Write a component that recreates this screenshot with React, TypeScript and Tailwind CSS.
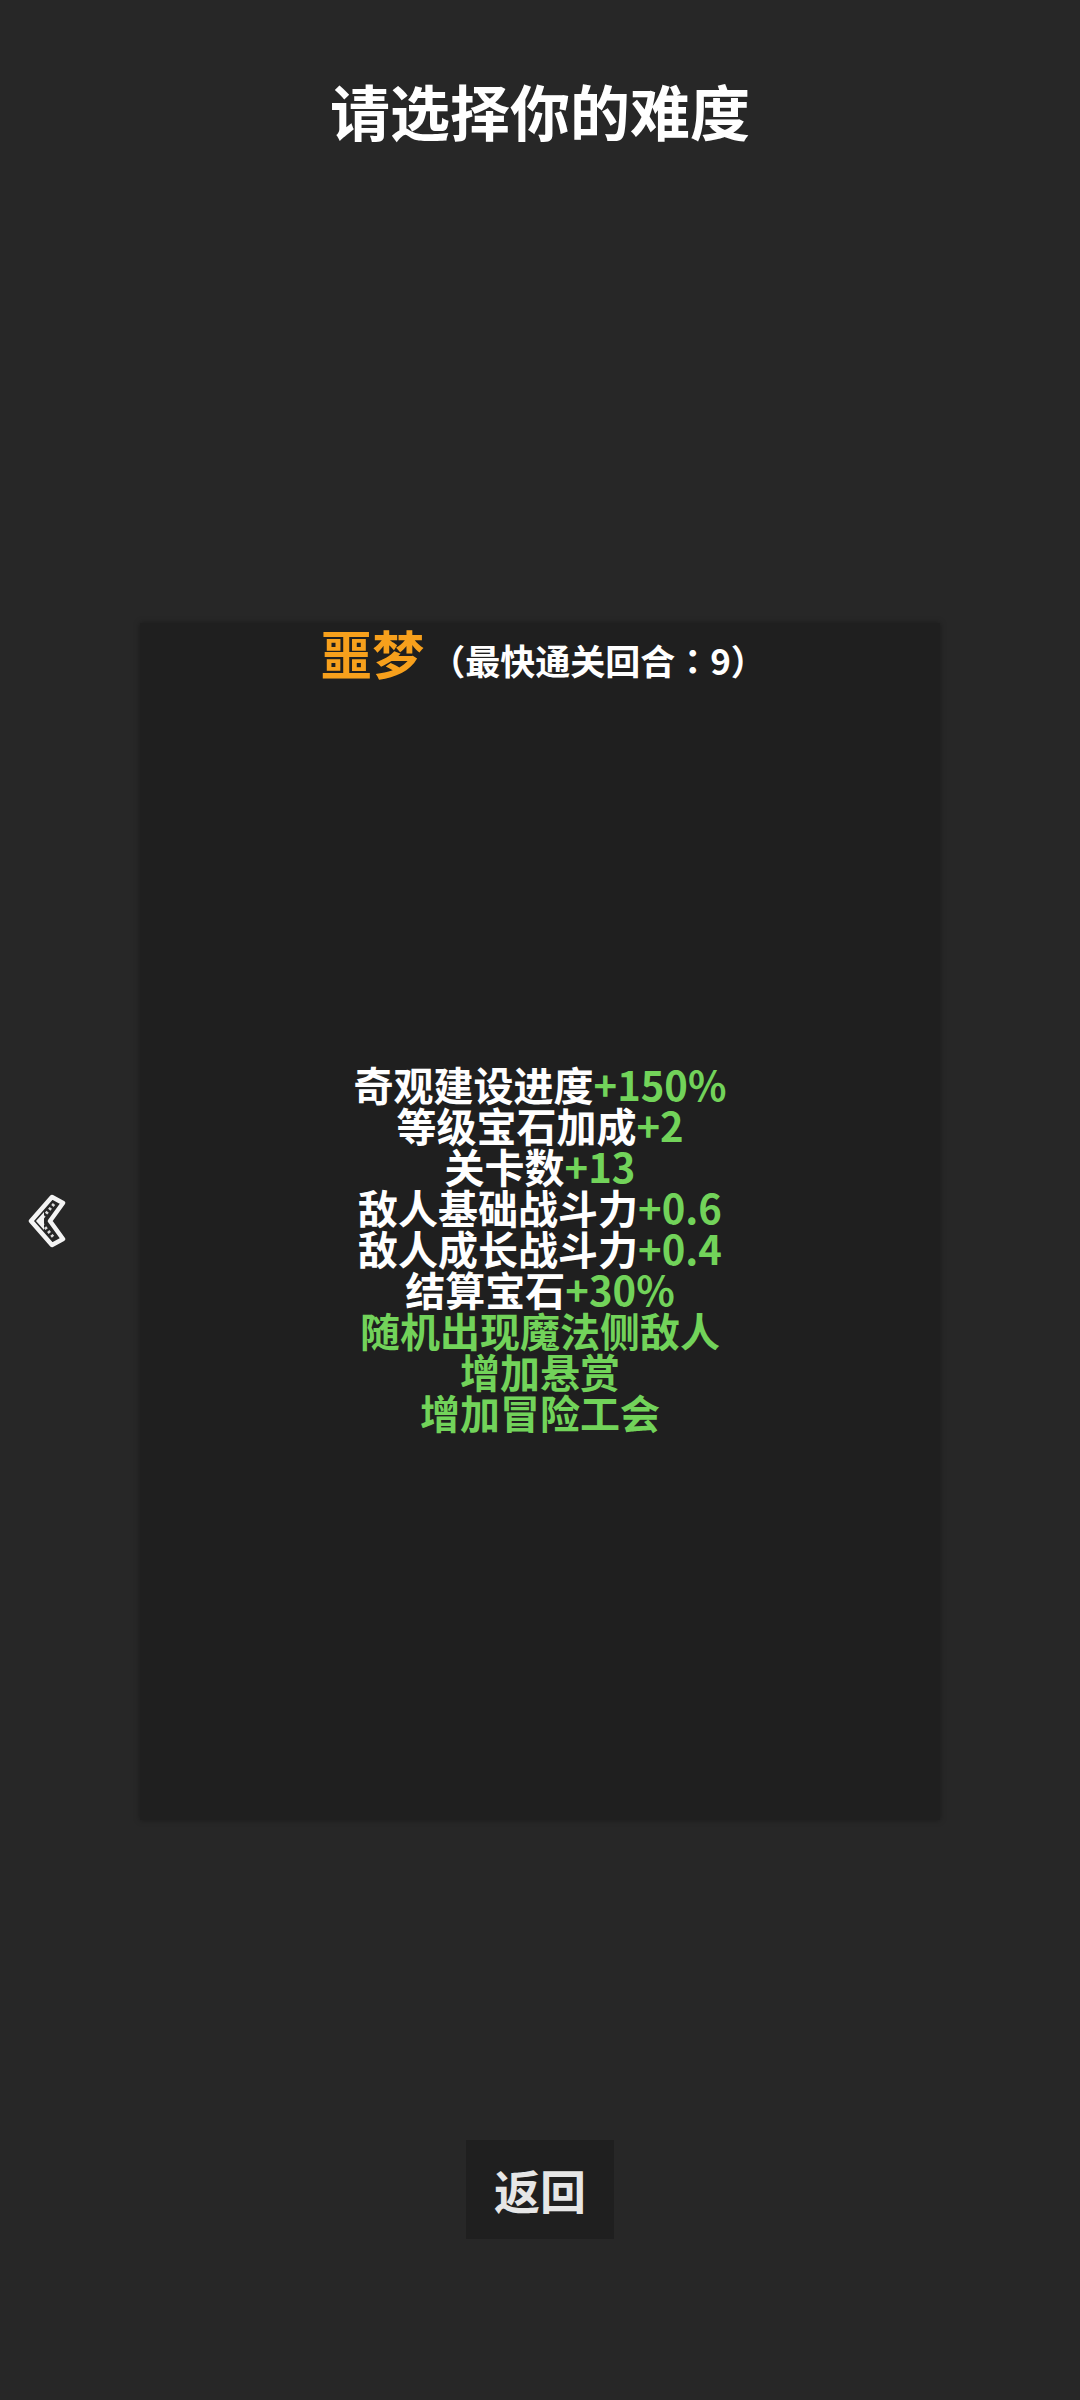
import React from 'react';

type Line = { label?: string; value: string };

const LINES: Line[] = [
  { label: '奇观建设进度', value: '+150%' },
  { label: '等级宝石加成', value: '+2' },
  { label: '关卡数', value: '+13' },
  { label: '敌人基础战斗力', value: '+0.6' },
  { label: '敌人成长战斗力', value: '+0.4' },
  { label: '结算宝石', value: '+30%' },
  { value: '随机出现魔法侧敌人' },
  { value: '增加悬赏' },
  { value: '增加冒险工会' },
];

// pixel-art style left chevron
const PixelChevron: React.FC = () => (
  <svg width="40" height="54" viewBox="0 0 40 54">
    <polygon points="26,3 37,9 24,27 37,45 26,51 5,27" fill="#262626" stroke="#f4f4f4" strokeWidth="4.5" strokeLinejoin="round" />
    <polyline points="28,10 14,27 28,44" fill="none" stroke="#dcdcdc" strokeWidth="3" strokeDasharray="2.5 2.5" />
    <polygon points="10,27 18,18 18,36" fill="#f4f4f4" />
  </svg>
);

const App: React.FC = () => {
  return (
    <div
      className="w-full h-[2400px] bg-[#272727] flex flex-col items-center relative"
      style={{ fontFamily: '"Noto Sans CJK SC", "Noto Sans", sans-serif' }}
    >
      <h1 className="pt-[68px] text-[60px] leading-[84px] font-bold text-white">请选择你的难度</h1>

      <div className="mt-[471px] w-[800px] h-[1197px] bg-[#1f1f1f] shadow-[0_0_6px_rgba(0,0,0,0.35)] flex flex-col">
        <div className="flex items-baseline justify-center leading-[60px] font-bold pl-[6px]">
          <span className="text-[52px] text-[#f7a01c] mr-[6px]">噩梦</span>
          <span className="text-[35px] text-white">
            （最快通关回合<span style={{ fontFamily: '"Noto Sans CJK TC", sans-serif' }}>：</span>9）
          </span>
        </div>
        <div className="flex-1 flex flex-col items-center justify-center pb-[14px]">
          {LINES.map((l, i) => (
            <div key={i} className="text-[40px] leading-[41px] font-bold text-center">
              {l.label && <span className="text-white">{l.label}</span>}
              <span className="text-[#72d35a]">{l.value}</span>
            </div>
          ))}
        </div>
      </div>

      <div className="absolute left-[26px] top-[1194px]">
        <PixelChevron />
      </div>

      <button className="mt-[320px] w-[148px] h-[99px] bg-[#1f1f1f] text-[#e6e6e6] text-[46px] font-bold flex items-center justify-center">
        返回
      </button>
    </div>
  );
};

export default App;
